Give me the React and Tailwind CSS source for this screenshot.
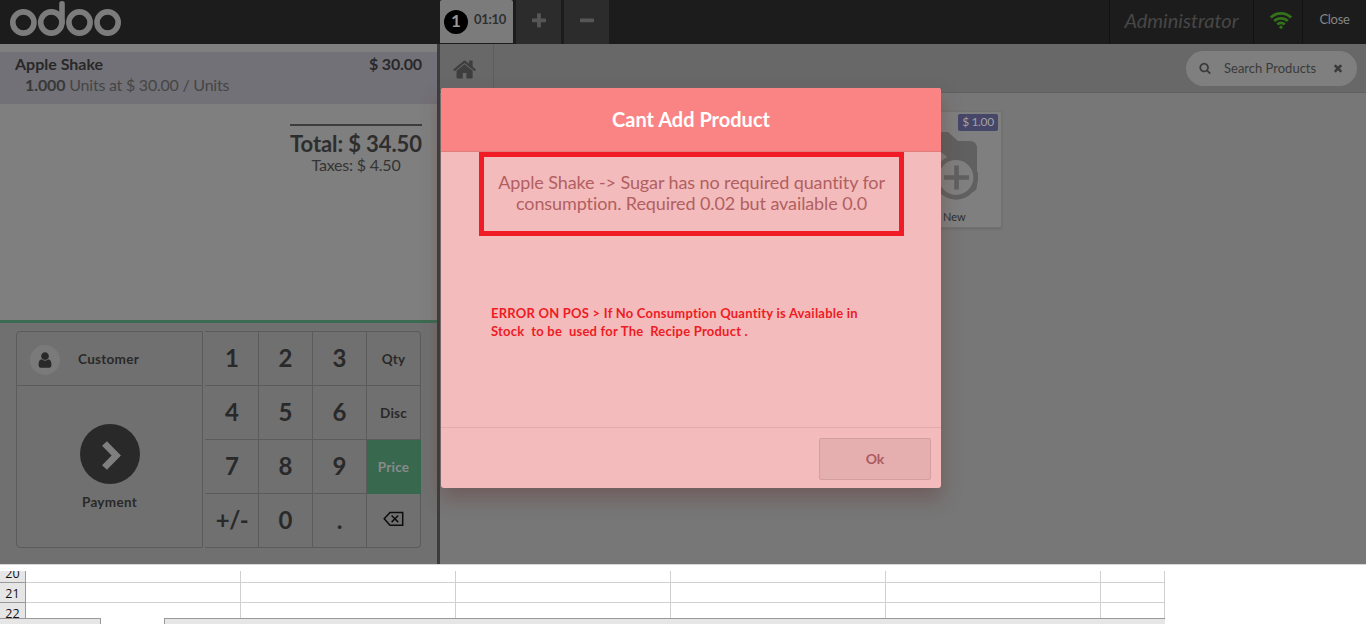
import React from "react";

const Glyph = ({ d, className }) => (
  <svg viewBox="0 0 1792 1792" className={className} fill="currentColor"><path d={d} /></svg>
);

const HOME = "M1408 992v480q0 26-19 45t-45 19h-384v-384h-256v384h-384q-26 0-45-19t-19-45v-480q0-1 .5-3t.5-3l575-474 575 474q1 2 1 6zm223-69l-62 74q-8 9-21 11h-3q-13 0-21-7l-692-577-692 577q-12 8-24 7-13-2-21-11l-62-74q-8-10-7-23.5t11-21.5l719-599q32-26 76-26t76 26l244 204v-195q0-14 9-23t23-9h192q14 0 23 9t9 23v408l219 182q10 8 11 21.5t-7 23.5z";
const SEARCH = "M1216 832q0-185-131.5-316.5t-316.5-131.5-316.5 131.5-131.5 316.5 131.5 316.5 316.5 131.5 316.5-131.5 131.5-316.5zm512 832q0 52-38 90t-90 38q-54 0-90-38l-343-342q-179 124-399 124-143 0-273.5-55.5t-225-150-150-225-55.5-273.5 55.5-273.5 150-225 225-150 273.5-55.5 273.5 55.5 225 150 150 225 55.5 273.5q0 220-124 399l343 343q37 37 37 90z";
const PLUS = "M1600 736v192q0 40-28 68t-68 28h-416v416q0 40-28 68t-68 28h-192q-40 0-68-28t-28-68v-416h-416q-40 0-68-28t-28-68v-192q0-40 28-68t68-28h416v-416q0-40 28-68t68-28h192q40 0 68 28t28 68v416h416q40 0 68 28t28 68z";
const MINUS = "M1600 736v192q0 40-28 68t-68 28h-1216q-40 0-68-28t-28-68v-192q0-40 28-68t68-28h1216q40 0 68 28t28 68z";
const TIMES = "M1490 1322q0 40-28 68l-136 136q-28 28-68 28t-68-28l-294-294-294 294q-28 28-68 28t-68-28l-136-136q-28-28-28-68t28-68l294-294-294-294q-28-28-28-68t28-68l136-136q28-28 68-28t68 28l294 294 294-294q28-28 68-28t68 28l136 136q28 28 28 68t-28 68l-294 294 294 294q28 28 28 68z";
const USER = "M1536 1399q0 109-62.5 187t-150.5 78h-854q-88 0-150.5-78t-62.5-187q0-85 8.5-160.5t31.5-152 58.5-131 94-89 134.5-34.5q131 128 313 128t313-128q76 0 134.5 34.5t94 89 58.5 131 31.5 152 8.5 160.5zm-256-887q0 159-112.5 271.5t-271.5 112.5-271.5-112.5-112.5-271.5 112.5-271.5 271.5-112.5 271.5 112.5 112.5 271.5z";

function Logo() {
  return (
    <svg className="ml-[9px] block h-[38px] w-[114px]" viewBox="9 0 114 38" fill="none" stroke="#7c7c7c" strokeWidth="5.6">
      <circle cx="23.4" cy="22.5" r="10.6" />
      <circle cx="51.3" cy="22.5" r="10.6" />
      <circle cx="79.5" cy="22.5" r="10.6" />
      <circle cx="107.6" cy="22.5" r="10.6" />
      <path d="M62 22.5V3.8" strokeLinecap="round" />
    </svg>
  );
}

function Wifi() {
  return (
    <svg viewBox="0 0 24 18" className="-mt-[5px] h-[18px] w-6" fill="none" stroke="#34721a" strokeWidth="2.8">
      <path d="M1.8 6.6a14.3 14.3 0 0 1 20.4 0" />
      <path d="M5.2 10.1a9.6 9.6 0 0 1 13.6 0" />
      <path d="M8.4 13.5a5.1 5.1 0 0 1 7.200 0" />
      <circle cx="12" cy="16.2" r="1.6" fill="#34721a" stroke="none" />
    </svg>
  );
}

function Backspace() {
  return (
    <svg viewBox="0 0 21 16" className="-ml-px -mt-[3px] h-4 w-[21px]" fill="none" stroke="#0c0c0c" strokeWidth="1.5">
      <path d="M7 1.4h12.700v12.800H7L1.200 7.800z" />
      <path d="M8.600 4.500l6.600 6.600M15.200 4.500l-6.600 6.600" />
    </svg>
  );
}

const keys = ["1", "2", "3", "Qty", "4", "5", "6", "Disc", "7", "8", "9", "Price", "+/-", "0", ".", "del"];

function Key({ k, i }) {
  const mode = i % 4 === 3;
  const first = i % 4 === 0;
  const price = k === "Price";
  return (
    <div
      className={
        "flex items-center justify-center border-b border-r border-[#5b5b5b] font-bold " +
        (mode ? "text-[13.5px] tracking-[0.2px] " : "pb-[2px] text-[24px] ") +
        (k === "+/-" ? "tracking-[-0.6px] " : "") +
        (first ? "pl-px " : "") +
        (price ? "bg-[#38694f] border-[#38694f] text-[#8a8a8a] " : "text-[#292929] ") +
        (k === "del" ? "rounded-br-[4px] " : "") +
        (k === "Qty" ? "rounded-tr-[4px]" : "")
      }
    >
      {k === "del" ? <Backspace /> : <span className={mode ? "pt-px" : ""}>{k}</span>}
    </div>
  );
}

function OrderPane() {
  return (
    <section className="flex w-[440px] shrink-0 flex-col border-r-[3px] border-[#3d3c3c] bg-[#7f7f7f]">
      <div className="mt-2 h-[52px] bg-[#727177] pl-[15px] pr-[15px] pt-px text-[16px] leading-[21px]">
        <div className="flex justify-between font-bold text-[#282828]"><span>Apple Shake</span><span className="tracking-[-0.15px]">$ 30.00</span></div>
        <div className="pl-[10px] tracking-[-0.23px] text-[#454545]"><b className="tracking-[-0.1px] text-[#383838]">1.000</b> Units at $ 30.00 / Units</div>
      </div>
      <div className="mr-[15px] mt-5 w-[132px] self-end border-t-2 border-[#3d3d3d] pt-[5px] text-center text-[#2e2e2e]">
        <div className="whitespace-nowrap text-[22px] font-bold leading-[25px] tracking-[-0.1px]">Total: $ 34.50</div>
        <div className="text-[16px] leading-[18px] tracking-[-0.2px] text-[#343434]">Taxes: $ 4.50</div>
      </div>
      <div className="mt-auto flex h-[244px] border-t-[3px] border-[#3b6b52] bg-[#707070] pl-4 pt-2">
        <div className="flex h-[217px] w-[187px] flex-col rounded-l-[4px] border border-[#5b5b5b] text-[13.5px] font-bold tracking-[0.3px] text-[#292929]">
          <div className="flex h-[54px] items-center border-b border-[#5b5b5b] pl-[13px]">
            <span className="mt-[3px] flex size-[30px] items-center justify-center rounded-full bg-[#7a7a7a]"><Glyph d={USER} className="-mt-[1px] size-[18px]" /></span>
            <span className="ml-[18px] mt-px">Customer</span>
          </div>
          <div className="flex flex-1 flex-col items-center pt-[38px]">
            <span className="flex size-[60px] items-center justify-center rounded-full bg-[#292929]">
              <svg viewBox="0 0 60 60" className="size-[60px]"><path d="M24.500 19.500L36.200 31.500L24.500 43.500" fill="none" stroke="#7f7f7f" strokeWidth="6.8" /></svg>
            </span>
            <span className="mt-2">Payment</span>
          </div>
        </div>
        <div className="ml-[2px] grid h-[217px] w-[216px] grid-cols-[54px_54px_54px_54px] grid-rows-[54px_54px_54px_54px] rounded-tr-[4px] border-t border-[#5b5b5b]">
          {keys.map((k, i) => <Key key={k} k={k} i={i} />)}
        </div>
      </div>
    </section>
  );
}

function ProductCard() {
  return (
    <article className="relative ml-[441px] mt-[18px] h-[117px] w-[121px] rounded-[2px] border border-[#727272] bg-[#7f7f7f] shadow-[0_1px_2px_#696969]">
      <svg viewBox="882 112 120 117" className="absolute left-0 top-0 h-[117px] w-[120px]">
        <path d="M900 141h17l9-9h22l10 9h12q7 0 7 8v36q0 7-6 7H900z" fill="#606060" />
        <circle cx="956" cy="177.500" r="22" fill="#606060" />
        <circle cx="932" cy="169" r="19" fill="#7f7f7f" />
        <circle cx="956" cy="177.500" r="19.700" fill="#7f7f7f" stroke="#606060" strokeWidth="4.600" />
        <path d="M944 177.500h25M956.500 165.500v24" stroke="#606060" strokeWidth="4.600" />
      </svg>
      <span className="absolute right-[3px] top-[2px] flex h-[17px] w-10 items-center justify-center rounded-[2px] bg-[#454668] pb-[2px] text-[12px] tracking-[-0.35px] text-[#a0a0a0]">$ 1.00</span>
      <span className="absolute bottom-[3px] left-[61px] text-[11px] leading-[15px] text-[#2c2c2c]">New</span>
    </article>
  );
}

function Popup() {
  return (
    <div className="absolute left-[441px] top-[88px] flex h-[400px] w-[500px] flex-col overflow-visible rounded-[3px] bg-[#f3bbbb] text-center shadow-[0_10px_20px_rgba(100,50,50,0.4)]">
      <h1 className="flex h-16 items-center justify-center rounded-t-[3px] border-b border-[#df7d7d] bg-[#fa8383] pb-[2px] text-[20px] font-bold text-white">Cant Add Product</h1>
      <p className="ml-[38px] h-[84px] w-[425px] whitespace-nowrap border-[5px] border-[#f01b24] pt-[15px] text-[18px] leading-[21px] tracking-[-0.1px] text-[#b25f62]">
        Apple Shake -&gt; Sugar has no required quantity for<br />consumption. Required 0.02 but available 0.0
      </p>
      <p className="ml-[50px] mt-[68px] whitespace-pre text-left text-[13px] font-bold leading-[18px] tracking-[0.23px] text-[#ee1c25]">{"ERROR ON POS > If No Consumption Quantity is Available in\nStock  to be  used for The  Recipe Product ."}</p>
      <footer className="mt-auto flex h-[61px] justify-end border-t border-[#e3abab] pr-[10px] pt-[10px]">
        <button className="h-[42px] w-[112px] rounded-[2px] border border-[#d2a0a0] bg-[#e6afaf] pb-[2px] text-[14px] font-bold text-[#ab5b5f]">Ok</button>
      </footer>
    </div>
  );
}

const rows = [
  ["20", "h-3", "-mt-[6px]"],
  ["21", "h-5", "mt-[2px]"],
  ["22", "h-4", "mt-[2px]"],
];

function Sheet() {
  return (
    <div className="mt-[6px] w-[1165px]">
      <div className="h-[47px] overflow-hidden">
        {rows.map(([n, h, shift]) => (
          <div key={n} className={"flex overflow-hidden " + h}>
            <div className="flex w-[26px] shrink-0 items-start justify-center overflow-hidden border-b border-r border-[#999] bg-[#e6e6e6] font-['Open_Sans',sans-serif] text-[12.5px] leading-[17px] text-[#111]">
              <span className={shift}>{n}</span>
            </div>
            <div className="grid flex-1 grid-cols-[215px_215px_215px_215px_215px_64px] border-b border-[#d0d0d0]">
              {[0, 1, 2, 3, 4, 5].map((c) => <div key={c} className="border-r border-[#d0d0d0]" />)}
            </div>
          </div>
        ))}
      </div>
      <div className="flex h-[6px]">
        <div className="w-[101px] border-r border-t border-[#999] bg-[#e6e6e6]" />
        <div className="w-[63px]" />
        <div className="flex-1 border-l border-t border-[#999] bg-[#e6e6e6]" />
      </div>
    </div>
  );
}

export default function App() {
  return (
    <div className="h-[624px] w-[1366px] overflow-hidden bg-white font-[Lato,sans-serif] [font-variant-ligatures:none]">
      <div className="relative flex h-[564px] flex-col overflow-hidden">
        <header className="flex h-11 shrink-0 bg-[#1c1c1c]">
          <div className="w-[440px]"><Logo /></div>
          <div className="flex h-[43px] w-[73px] items-center rounded-t-[2px] bg-[#7b7b7b] pl-1">
            <span className="flex size-6 items-center justify-center rounded-full bg-black pb-px text-[17px] font-bold text-[#999]">1</span>
            <span className="ml-[6px] mt-[-3px] text-[13px] font-bold tracking-[-0.3px] text-[#303030]">01:10</span>
          </div>
          <div className="ml-[3px] flex h-11 w-[45px] items-center justify-center bg-[#2c2c2c] pb-[2px] text-[#565656]"><Glyph d={PLUS} className="size-[18px]" /></div>
          <div className="ml-[3px] flex h-11 w-[45px] items-center justify-center bg-[#2c2c2c] pb-[2px] text-[#565656]"><Glyph d={MINUS} className="size-[18px]" /></div>
          <div className="ml-auto flex w-[145px] items-center justify-center border-x border-[#121212] pb-[4px] text-[20px] italic text-[#474747]">Administrator</div>
          <div className="flex w-[49px] items-center justify-center border-r border-[#121212] pl-[5px]"><Wifi /></div>
          <div className="flex w-[63px] items-center justify-center pb-[4px] text-[13px] tracking-[-0.3px] text-[#858585]">Close</div>
        </header>
        <main className="flex min-h-0 flex-1">
          <OrderPane />
          <section className="flex-1 bg-[#777]">
            <div className="flex h-[49px] items-center justify-between border-b border-[#606060] bg-[#686868] pr-[9px]">
              <div className="flex h-full w-[54px] items-center justify-center border-r border-[#5d5d5d] text-[#3e3e3e]"><Glyph d={HOME} className="-ml-[2px] mt-[3px] size-[25px]" /></div>
              <div className="flex h-[35px] w-[171px] items-center rounded-full bg-[#7f7f7f] pl-[13px] text-[#3a3a3a]">
                <Glyph d={SEARCH} className="size-[12px]" />
                <span className="ml-[13px] mt-px text-[13px]">Search Products</span>
                <Glyph d={TIMES} className="ml-[16px] size-[12px]" />
              </div>
            </div>
            <ProductCard />
          </section>
        </main>
        <Popup />
      </div>
      <div className="h-px bg-[#d7d7d7]" />
      <Sheet />
    </div>
  );
}
